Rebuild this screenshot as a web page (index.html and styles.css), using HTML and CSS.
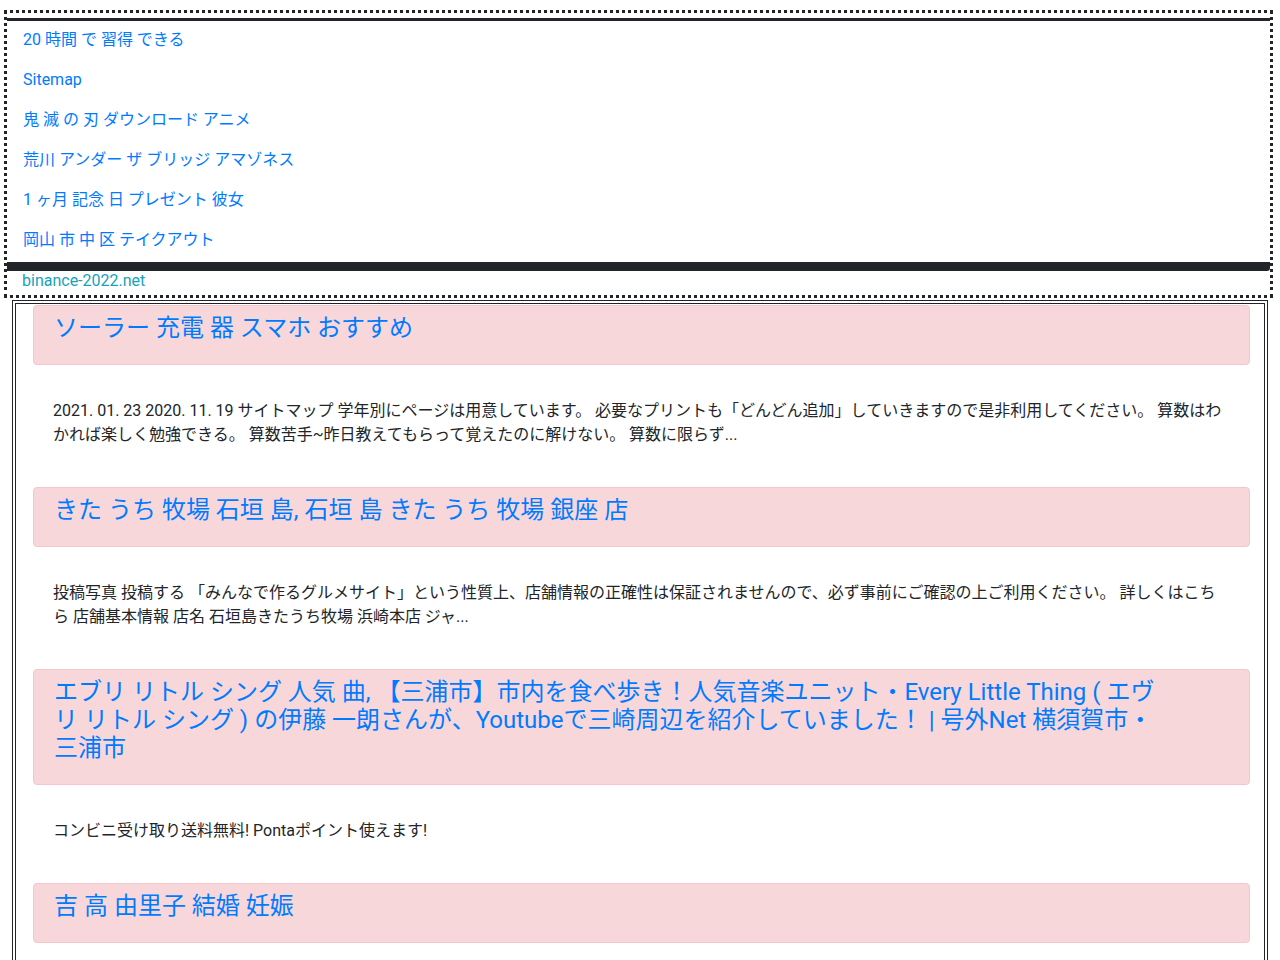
FILE: index.html
```html
<!DOCTYPE html>
<html lang="ja">
<head>
<meta charset="utf-8">
<title>binance-2022.net</title>
<link rel="stylesheet" href="styles.css">
</head>
<body>
<header class="site-header">
  <nav class="nav-box">
    <a class="nav-link" href="#">20 時間 で 習得 できる</a>
    <a class="nav-link" href="#">Sitemap</a>
    <a class="nav-link" href="#">鬼 滅 の 刃 ダウンロード アニメ</a>
    <a class="nav-link" href="#">荒川 アンダー ザ ブリッジ アマゾネス</a>
    <a class="nav-link" href="#">1 ヶ月 記念 日 プレゼント 彼女</a>
    <a class="nav-link" href="#">岡山 市 中 区 テイクアウト</a>
  </nav>
  <p class="site-name">binance-2022.net</p>
</header>
<main class="main">
  <article class="post">
    <div class="post-card"><h2 class="post-title"><a href="#">ソーラー 充電 器 スマホ おすすめ</a></h2></div>
    <p class="post-text">2021. 01. 23 2020. 11. 19 サイトマップ 学年別にページは用意しています。 必要なプリントも「どんどん追加」していきますので是非利用してください。 算数はわかれば楽しく勉強できる。 算数苦手~昨日教えてもらって覚えたのに解けない。 算数に限らず...</p>
  </article>
  <article class="post">
    <div class="post-card"><h2 class="post-title"><a href="#">きた うち 牧場 石垣 島, 石垣 島 きた うち 牧場 銀座 店</a></h2></div>
    <p class="post-text">投稿写真 投稿する 「みんなで作るグルメサイト」という性質上、店舗情報の正確性は保証されませんので、必ず事前にご確認の上ご利用ください。 詳しくはこちら 店舗基本情報 店名 石垣島きたうち牧場 浜崎本店 ジャ...</p>
  </article>
  <article class="post">
    <div class="post-card"><h2 class="post-title"><a href="#">エブリ リトル シング 人気 曲, 【三浦市】市内を食べ歩き！人気音楽ユニット・Every Little Thing ( エヴリ リトル シング ) の伊藤 一朗さんが、Youtubeで三崎周辺を紹介していました！ | 号外Net 横須賀市・三浦市</a></h2></div>
    <p class="post-text">コンビニ受け取り送料無料! Pontaポイント使えます!</p>
  </article>
  <article class="post">
    <div class="post-card"><h2 class="post-title"><a href="#">吉 高 由里子 結婚 妊娠</a></h2></div>
  </article>
</main>
</body>
</html>
```
FILE: styles.css
```css
html, body {
  margin: 0;
  padding: 0;
  background: #fff;
}
body {
  font-family: Roboto, "Noto Sans CJK JP", sans-serif;
  font-size: 16px;
  line-height: 1.5;
  color: #212529;
}
a {
  color: #007bff;
  text-decoration: none;
}
.site-header {
  margin: 10px 7px 0 4px;
  border: 3px dotted #212529;
}
.nav-box {
  margin-top: 5px;
  border-top: 3px solid #212529;
  border-bottom: 9px solid #212529;
  border-bottom-right-radius: 3px;
  padding: 7px 16px 10px;
  display: flex;
  flex-direction: column;
  align-items: flex-start;
  gap: 16px;
}
.nav-link {
  display: block;
  line-height: 24px;
}
.site-name {
  margin: 0;
  padding: 0 15px 4px;
  font-size: 16px;
  line-height: 20px;
  color: #17a2b8;
}
.main {
  margin: 2px 12px 0 12px;
  border: 4px double #212529;
  padding: 1px 14px 40px 17px;
}
.post-card {
  background: #f8d7da;
  border: 1px solid #f5c6cb;
  border-radius: 4px;
  padding: 8px 20px;
}
.post-title {
  margin: 0 70px 14px 0;
  font-size: 24px;
  line-height: 28px;
  font-weight: 400;
}
.post-text {
  margin: 34px 20px 40px;
  font-size: 16px;
  line-height: 24px;
}
```
